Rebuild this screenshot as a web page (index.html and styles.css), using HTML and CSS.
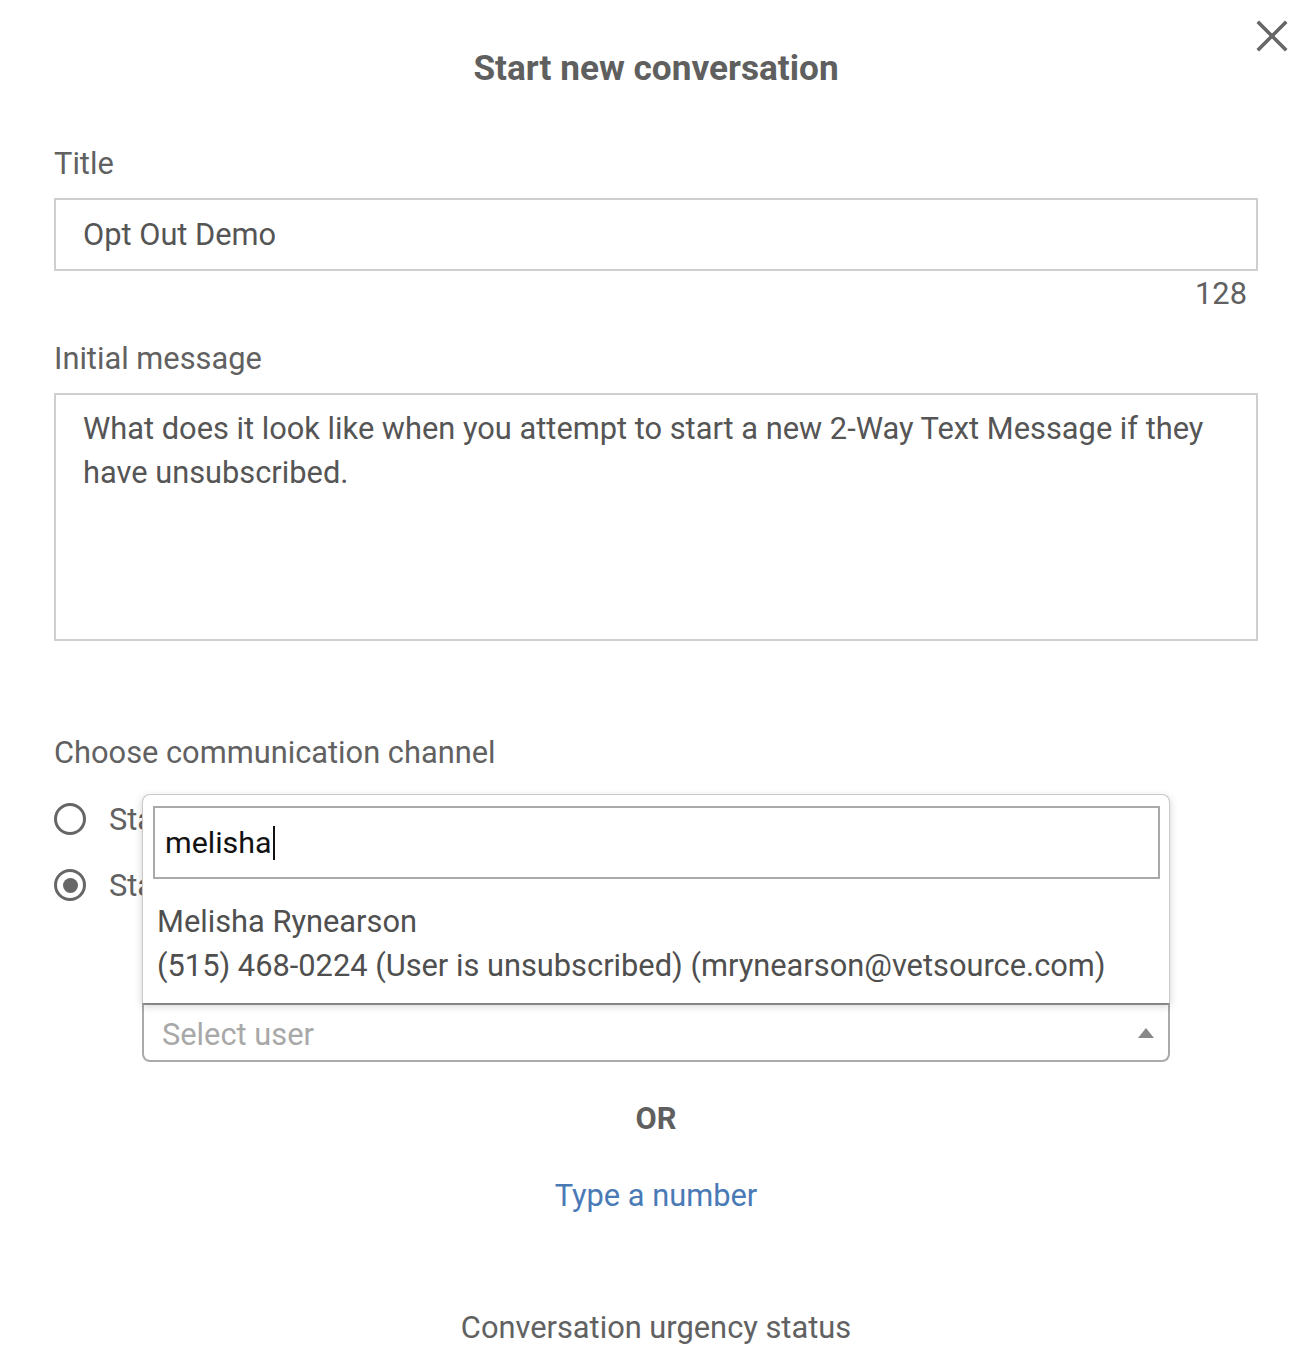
FILE: index.html
```html
<!DOCTYPE html>
<html lang="en">
<head>
<meta charset="utf-8">
<title>Start new conversation</title>
<link rel="stylesheet" href="styles.css">
</head>
<body>
<div class="dialog">
  <h1 class="dialog-title">Start new conversation</h1>
  <button class="close" aria-label="Close">
    <svg viewBox="0 0 32 32" width="32" height="32"><path d="M3 3 L29 29 M29 3 L3 29" stroke="#666" stroke-width="3.6" stroke-linecap="square" fill="none"/></svg>
  </button>

  <div class="field first">
    <label class="label">Title</label>
    <div class="input">Opt Out Demo</div>
    <div class="counter">128</div>
  </div>

  <div class="field">
    <label class="label">Initial message</label>
    <div class="textarea">What does it look like when you attempt to start a new 2-Way Text Message if they have unsubscribed.</div>
  </div>

  <div class="field channel">
    <label class="label">Choose communication channel</label>
    <div class="radios">
      <div class="radio-row"><span class="radio"></span><span class="radio-label">Standard email</span></div>
      <div class="radio-row"><span class="radio checked"></span><span class="radio-label">Standard text message</span></div>
    </div>
    <div class="select-wrap">
      <div class="dropdown">
        <div class="search"><span class="search-text">melisha</span><span class="caret"></span></div>
        <div class="option">
          <div>Melisha Rynearson</div>
          <div>(515) 468-0224 (User is unsubscribed) (mrynearson@vetsource.com)</div>
        </div>
      </div>
      <div class="select">
        <span class="placeholder">Select user</span>
        <span class="arrow"></span>
      </div>
    </div>
  </div>

  <div class="or">OR</div>
  <a class="type-number" href="#">Type a number</a>
  <div class="urgency">Conversation urgency status</div>
</div>
</body>
</html>
```

FILE: styles.css
```css
* { box-sizing: border-box; }
html, body { margin: 0; padding: 0; background: #fff; }
body {
  font-family: Roboto, "Noto Sans", Arial, sans-serif;
  color: #616161;
  font-size: 30.8px;
}
.dialog {
  position: relative;
  padding: 44px 48px 0 54px;
  display: flex;
  flex-direction: column;
}
.dialog-title {
  margin: 0;
  font-size: 35.2px;
  font-weight: 700;
  line-height: 48px;
  text-align: center;
  color: #5f5f5f;
}
.close {
  position: absolute;
  top: 20px;
  right: 18px;
  width: 32px;
  height: 32px;
  padding: 0;
  border: 0;
  background: none;
}
.close svg { display: block; }
.field { display: flex; flex-direction: column; }
.field.first { margin-top: 54px; }
.label {
  display: block;
  line-height: 34px;
  padding-top: 1px;
  margin-bottom: 17px;
  color: #616161;
}
.field + .field { margin-top: 30px; }
.input {
  height: 73px;
  border: 2px solid #cfcfcf;
  padding: 0 27px;
  display: flex;
  align-items: center;
  color: #555;
}
.counter {
  align-self: flex-end;
  margin-top: 6px;
  margin-right: 11px;
  line-height: 34px;
  color: #616161;
}
.textarea {
  height: 248px;
  border: 2px solid #cfcfcf;
  padding: 12px 27px;
  line-height: 44px;
  color: #555;
}
.field.channel { margin-top: 94px; }
.radios {
  display: flex;
  flex-direction: column;
  gap: 22px;
  margin-top: 10px;
}
.radio-row {
  display: flex;
  align-items: center;
  height: 44px;
  gap: 23px;
}
.radio {
  width: 32px;
  height: 32px;
  border-radius: 50%;
  border: 3.5px solid #666;
  display: flex;
  align-items: center;
  justify-content: center;
}
.radio.checked::after {
  content: "";
  width: 15px;
  height: 15px;
  border-radius: 50%;
  background: #666;
}
.radio-label { color: #616161; }
.select-wrap {
  position: relative;
  margin-top: 96px;
  margin-left: 88px;
  width: 1028px;
}
.dropdown {
  position: absolute;
  left: 0;
  right: 0;
  bottom: 100%;
  background: #fff;
  border: 1.5px solid #c8c8c8;
  border-bottom: 0;
  border-radius: 8px 8px 0 0;
  box-shadow: 0 3px 8px rgba(0,0,0,0.18);
  padding: 11px 9px 15px 10px;
  z-index: 2;
}
.search {
  height: 73px;
  border: 2px solid #a9a9a9;
  padding: 0 10px;
  display: flex;
  align-items: center;
  font-size: 30.4px;
  color: #111;
}
.caret {
  width: 2px;
  height: 34px;
  background: #111;
  margin-left: 1px;
}
.option {
  padding: 21px 4px 0 4px;
  line-height: 44px;
  color: #4f4f4f;
}
.select {
  height: 59px;
  border: 2px solid #aaa;
  border-top: 2px solid #999;
  border-radius: 0 0 8px 8px;
  display: flex;
  align-items: center;
  justify-content: space-between;
  padding: 3px 14px 0 18px;
}
.placeholder { color: #a8a8a8; }
.arrow {
  width: 0;
  height: 0;
  margin-top: -3px;
  border-left: 8px solid transparent;
  border-right: 8px solid transparent;
  border-bottom: 10px solid #888;
}
.or {
  margin-top: 40px;
  text-align: center;
  font-weight: 700;
  line-height: 34px;
  color: #5f5f5f;
}
.type-number {
  align-self: center;
  margin-top: 43px;
  line-height: 34px;
  color: #4a7ab6;
  text-decoration: none;
}
.urgency {
  margin-top: 98px;
  text-align: center;
  line-height: 34px;
  color: #616161;
}
```
